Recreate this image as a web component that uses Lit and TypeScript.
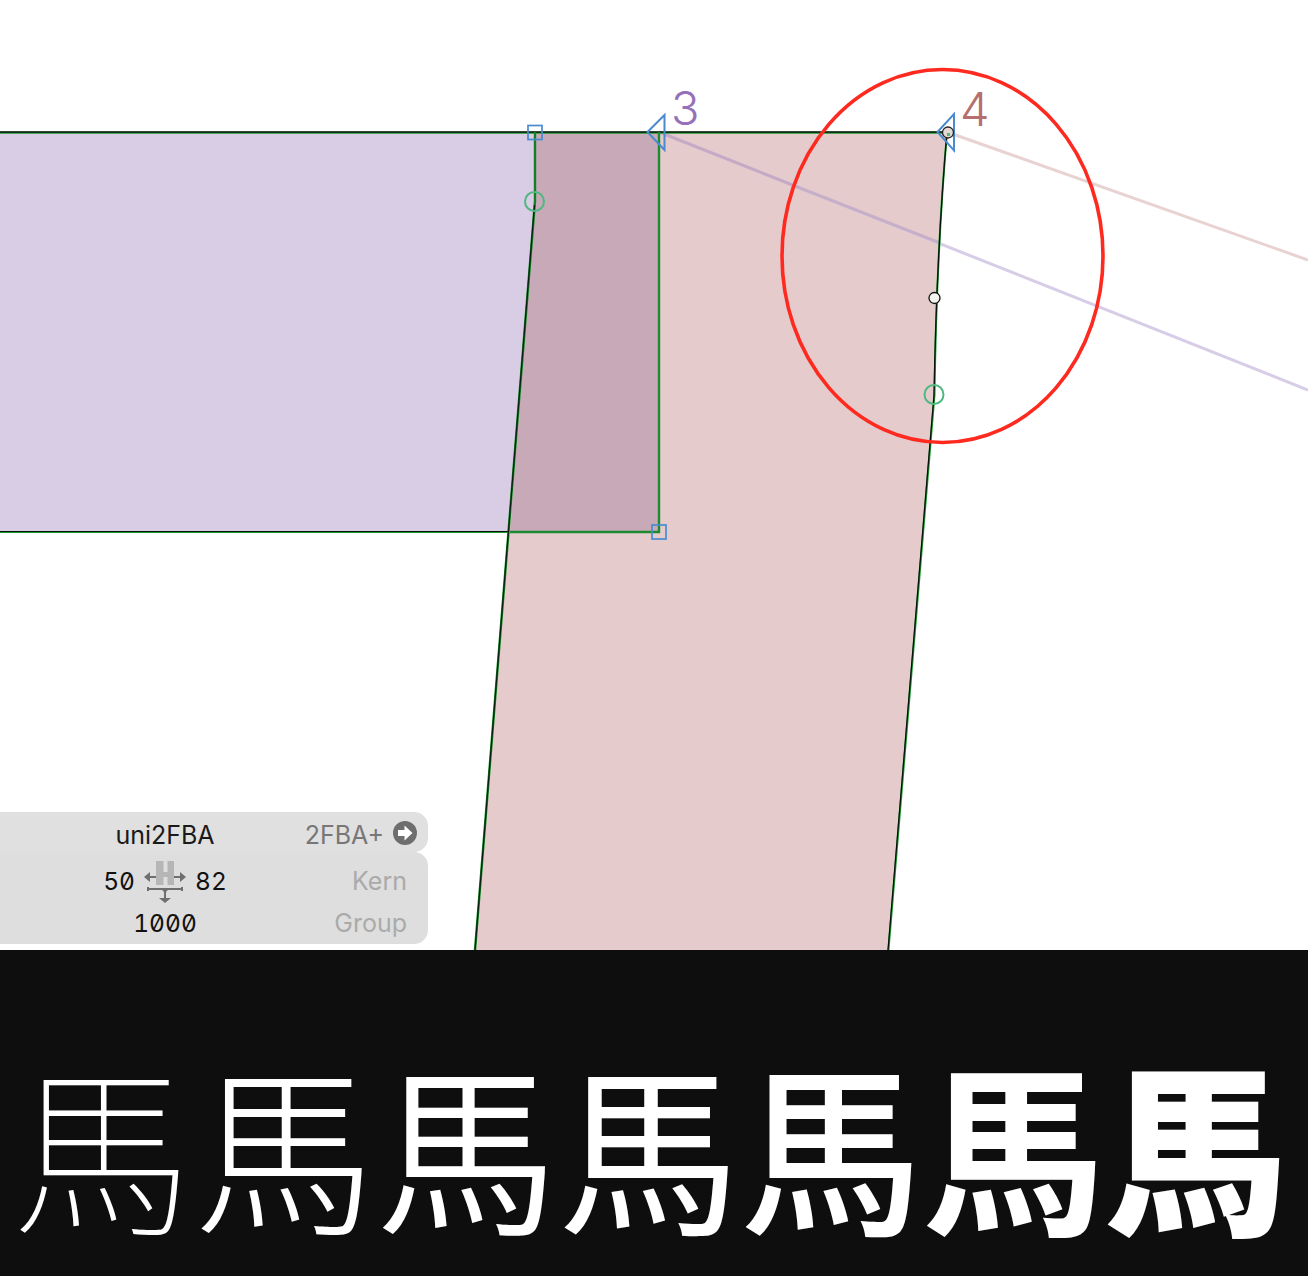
import { LitElement, html, css, svg } from "lit";
import { customElement } from "lit/decorators.js";

const WEIGHTS = [100, 300, 350, 400, 500, 700, 900];

@customElement("app-root")
export class AppRoot extends LitElement {
  static styles = css`
    :host { display: block; width: 1308px; height: 1276px; overflow: hidden; background: #fff; font-family: Inter, "Liberation Sans", sans-serif; }
    .canvas { position: relative; height: 950px; overflow: hidden; background: #fff; }
    .canvas svg.art { display: block; width: 1308px; height: 950px; }
    .label { font-family: Inter, "Noto Sans", sans-serif; font-weight: 300; font-size: 47px; }
    .panel { position: absolute; left: 0; top: 812px; width: 428px; display: flex; flex-direction: column; font-size: 25px; }
    .name { height: 40px; box-sizing: border-box; padding-top: 6px; background: #e0e0e0; border-radius: 0 14px 14px 0; display: grid; grid-template-columns: 330px minmax(0, 1fr); align-items: center; }
    .name .glyph { text-align: center; color: #1a1a1a; }
    .name .code { display: flex; align-items: center; justify-content: flex-end; gap: 9px; padding-right: 11px; color: #777; }
    .name .code svg { flex: none; margin-top: -4px; }
    .metrics { height: 92px; box-sizing: border-box; padding-top: 4px; background: #dedede; border-radius: 0 14px 14px 0; display: grid; grid-template-columns: 330px minmax(0, 1fr); grid-template-rows: 50px 34px; }
    .num { font-variant-numeric: tabular-nums slashed-zero; color: #111; font-size: 24.5px; font-weight: 400; }
    .side { display: flex; align-items: center; justify-content: center; gap: 8px; }
    .side svg { margin-top: 4px; flex: none; }
    .width { display: flex; align-items: center; justify-content: center; }
    .link { display: flex; align-items: center; justify-content: flex-end; padding-right: 21px; color: #aaa; }
    .strip { height: 326px; background: #0e0e0e; display: flex; padding: 83px 0 0 11px; box-sizing: border-box; }
    .strip span { width: 182.3px; flex: none; font-family: "Noto Sans CJK JP", "Noto Sans CJK TC", sans-serif; font-size: 182px; line-height: 1.2; color: #fff; text-align: center; }
  `;

  private art() {
    return svg`
      <polygon points="0,132 659,132 659,532 0,532" fill="#d8cde4" />
      <path d="M535 132 H947 C942 190 936 290 934 395 L888 950 H475 L535 201 Z" fill="#e5cbcc" />
      <path d="M535 132 H659 V532 H510 L535 201 Z" fill="#c8a9b8" />
      <line x1="659" y1="132" x2="1308" y2="390" stroke="#d8cde6" stroke-width="3" />
      <line x1="947" y1="132" x2="1308" y2="260" stroke="#e8d2d2" stroke-width="3" />
      <line x1="659" y1="132" x2="800" y2="188" stroke="#c5a9c5" stroke-width="3" />
      <line x1="800" y1="188" x2="940" y2="243" stroke="#c8afc8" stroke-width="3" />
      <g fill="none">
        <path d="M0 132.800 H947 C942 190 936 290 934.500 395 L888.500 950" stroke="#1c9a30" stroke-width="2" />
        <path d="M0 132 H947 C942 190 936 290 934 395 L888 950" stroke="#06140a" stroke-width="1.300" />
        <path d="M475 950 L535 201 V132" stroke="#128026" stroke-width="2.400" />
        <path d="M475 950 L534.500 205" stroke="#06200c" stroke-width="1.200" />
        <path d="M659 132 V532 H510" stroke="#1d8a30" stroke-width="2.400" />
        <path d="M0 532 H508" stroke="#1c9a30" stroke-width="2" />
        <path d="M0 531.500 H508" stroke="#06140a" stroke-width="1.200" />
        <ellipse cx="942.500" cy="256" rx="160.500" ry="186.500" stroke="#ff2a1f" stroke-width="3.600" />
        <path d="M647.500 132 L664.500 115 V150 Z M937.500 132 L954 114 V150.500 Z" stroke="#4a8acf" stroke-width="2" />
        <rect x="528" y="125.500" width="14" height="14" stroke="#4a8acf" stroke-width="1.700" />
        <rect x="652" y="525" width="14" height="14" stroke="#4a8acf" stroke-width="1.700" />
        <circle cx="534.500" cy="201.500" r="9.500" stroke="#4fb881" stroke-width="2" />
        <circle cx="934" cy="394.500" r="9.500" stroke="#4fb881" stroke-width="2" />
      </g>
      <circle cx="934.500" cy="298" r="5.500" fill="#f5f5f0" stroke="#111" stroke-width="1.300" />
      <circle cx="948" cy="132.500" r="5.500" fill="#e4d8d2" stroke="#222" stroke-width="1.300" />
      <path d="M947 133 h3 v3 h-3 Z" fill="#4fb881" />
      <text class="label" x="671" y="125" fill="#9670b9">3</text>
      <text class="label" x="960" y="126" fill="#b76e6e">4</text>
    `;
  }

  private sideIcon() {
    return html`<svg width="44" height="44" viewBox="0 0 44 44">
      <path d="M13 0 H20.500 V11 H24.500 V0 H31 V24 H24.500 V16 H20.500 V24 H13 Z" fill="#b6b6b6" />
      <g fill="#6f6f6f">
        <path d="M1 16 L7 11 V21 Z M43 16 L37 11 V21 Z" />
        <rect x="6" y="15" width="7" height="2" />
        <rect x="31" y="15" width="7" height="2" />
        <path d="M16 37 H28 L22 42 Z" />
      </g>
      <path d="M5 28 H39 M5 26 V30 M39 26 V30 M19 28 C21 28.500 22 30 22 32 V38 M25 28 C23 28.500 22 30 22 32" fill="none" stroke="#6f6f6f" stroke-width="2" />
    </svg>`;
  }

  render() {
    return html`
      <div class="canvas">
        <svg class="art" viewBox="0 0 1308 950">${this.art()}</svg>
        <div class="panel">
          <div class="name">
            <div class="glyph">uni2FBA</div>
            <div class="code">2FBA+
              <svg width="24" height="24" viewBox="0 0 24 24">
                <circle cx="12" cy="12" r="12" fill="#6e6e6e" />
                <path d="M5 9 H11.500 V4.500 L19.500 12 11.500 19.500 V15 H5 Z" fill="#fff" />
              </svg>
            </div>
          </div>
          <div class="metrics">
            <div class="side num"><span>50</span>${this.sideIcon()}<span>82</span></div>
            <div class="link">Kern</div>
            <div class="width num">1000</div>
            <div class="link">Group</div>
          </div>
        </div>
      </div>
      <div class="strip">
        ${WEIGHTS.map((w) => html`<span style="font-weight:${w}">馬</span>`)}
      </div>
    `;
  }
}
